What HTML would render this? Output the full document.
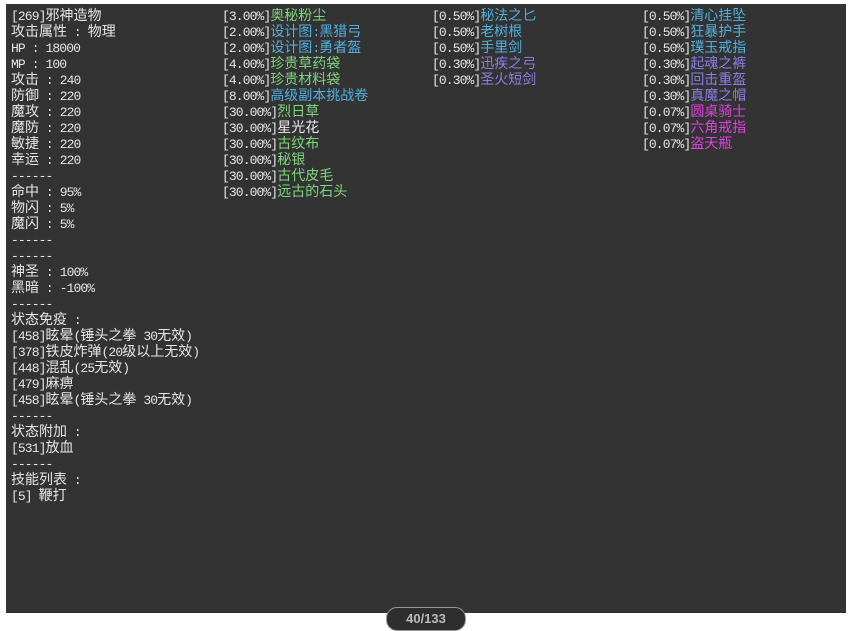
<!DOCTYPE html>
<html><head><meta charset="utf-8"><style>
html,body{margin:0;padding:0;background:#fff;width:853px;height:620px;overflow:hidden}
.p{position:absolute;left:6px;top:4px;width:840px;height:609px;background:#333}
.c{position:absolute;top:9px;font:14px/16px "Liberation Mono","Noto Sans CJK SC",monospace;color:#e6e6e6;white-space:pre}
.c *{line-height:0}
i{font-style:normal;font-size:13px;letter-spacing:-0.9px}
.g{color:#7ed67e}.b{color:#4fb0e0}.v{color:#8a7ee6}.m{color:#e040e0}.w{color:#eee}
.pill{position:absolute;left:386px;top:607px;width:78px;height:22px;border-radius:11px;background:#2e2e2e;border:1px solid #999;color:#bbb;font:bold 13px "Liberation Sans",sans-serif;text-align:center;line-height:22px}
</style></head><body>
<div class="p"></div>
<div class="c" style="left:11px"><i>[269]</i>邪神造物
攻击属性<i> : </i>物理
<i>HP : 18000</i>
<i>MP : 100</i>
攻击<i> : 240</i>
防御<i> : 220</i>
魔攻<i> : 220</i>
魔防<i> : 220</i>
敏捷<i> : 220</i>
幸运<i> : 220</i>
<i>------</i>
命中<i> : 95%</i>
物闪<i> : 5%</i>
魔闪<i> : 5%</i>
<i>------</i>
<i>------</i>
神圣<i> : 100%</i>
黑暗<i> : -100%</i>
<i>------</i>
状态免疫<i> :</i>
<i>[458]</i>眩晕<i>(</i>锤头之拳<i> 30</i>无效<i>)</i>
<i>[378]</i>铁皮炸弹<i>(20</i>级以上无效<i>)</i>
<i>[448]</i>混乱<i>(25</i>无效<i>)</i>
<i>[479]</i>麻痹
<i>[458]</i>眩晕<i>(</i>锤头之拳<i> 30</i>无效<i>)</i>
<i>------</i>
状态附加<i> :</i>
<i>[531]</i>放血
<i>------</i>
技能列表<i> :</i>
<i>[5] </i>鞭打</div>
<div class="c" style="left:222px"><i>[3.00%]</i><span class="g">奥秘粉尘</span>
<i>[2.00%]</i><span class="b">设计图<i>:</i>黑猎弓</span>
<i>[2.00%]</i><span class="b">设计图<i>:</i>勇者盔</span>
<i>[4.00%]</i><span class="g">珍贵草药袋</span>
<i>[4.00%]</i><span class="g">珍贵材料袋</span>
<i>[8.00%]</i><span class="b">高级副本挑战卷</span>
<i>[30.00%]</i><span class="g">烈日草</span>
<i>[30.00%]</i><span class="w">星光花</span>
<i>[30.00%]</i><span class="g">古纹布</span>
<i>[30.00%]</i><span class="g">秘银</span>
<i>[30.00%]</i><span class="g">古代皮毛</span>
<i>[30.00%]</i><span class="g">远古的石头</span></div>
<div class="c" style="left:432px"><i>[0.50%]</i><span class="b">秘法之匕</span>
<i>[0.50%]</i><span class="b">老树根</span>
<i>[0.50%]</i><span class="b">手里剑</span>
<i>[0.30%]</i><span class="v">迅疾之弓</span>
<i>[0.30%]</i><span class="v">圣火短剑</span></div>
<div class="c" style="left:642px"><i>[0.50%]</i><span class="b">清心挂坠</span>
<i>[0.50%]</i><span class="b">狂暴护手</span>
<i>[0.50%]</i><span class="b">璞玉戒指</span>
<i>[0.30%]</i><span class="v">起魂之裤</span>
<i>[0.30%]</i><span class="v">回击重盔</span>
<i>[0.30%]</i><span class="v">真魔之帽</span>
<i>[0.07%]</i><span class="m">圆桌骑士</span>
<i>[0.07%]</i><span class="m">六角戒指</span>
<i>[0.07%]</i><span class="m">盗天瓶</span></div>
<div class="pill">40/133</div>
</body></html>
